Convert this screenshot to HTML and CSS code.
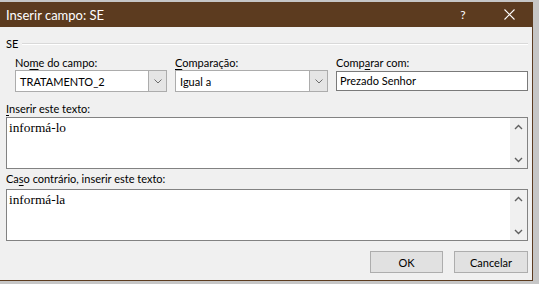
FILE: index.html
```html
<!DOCTYPE html>
<html lang="pt">
    <head>
        <meta charset="utf-8" />
        <title>Inserir campo: SE</title>
        <link rel="stylesheet" href="styles.css">
    </head>
    <body>
        <div class="window">
            <div class="titlebar">
                <span class="title">Inserir campo: SE</span>
                <span class="caption-btn help">?</span>
                <span class="caption-btn close">
                    <svg width="11" height="11" viewBox="0 0 11 11">
                        <path d="M0.5 0.5L10.5 10.5M10.5 0.5L0.5 10.5" stroke="#fff" stroke-width="1.1" fill="none" />
                    </svg>
                </span>
            </div>
            <div class="content">
                <div class="group-head">
                    <span>SE</span>
                    <span class="rule"></span>
                </div>
                <div class="fields">
                    <div class="field f1">
                        <label>No<u>m</u>e do campo:</label>
                        <div class="combo">
                            <span class="value">TRATAMENTO_2</span>
                            <span class="drop">
                                <svg width="8" height="5" viewBox="0 0 8 5"><path d="M0.5 0.5L4 4L7.5 0.5" stroke="#6d6d6d" fill="none" /></svg>
                            </span>
                        </div>
                    </div>
                    <div class="field f2">
                        <label><u>C</u>omparação:</label>
                        <div class="combo">
                            <span class="value">Igual a</span>
                            <span class="drop">
                                <svg width="8" height="5" viewBox="0 0 8 5"><path d="M0.5 0.5L4 4L7.5 0.5" stroke="#6d6d6d" fill="none" /></svg>
                            </span>
                        </div>
                    </div>
                    <div class="field f3">
                        <label>Comp<u>a</u>rar com:</label>
                        <div class="textbox">Prezado Senhor</div>
                    </div>
                </div>

                <label class="area-label"><u>I</u>nserir este texto:</label>
                <div class="area">
                    <div class="area-text">informá-lo</div>
                    <div class="vscroll">
                        <svg width="9" height="6" viewBox="0 0 9 6"><path d="M1 5L4.5 1.5L8 5" stroke="#606060" stroke-width="1.4" fill="none" /></svg>
                        <svg width="9" height="6" viewBox="0 0 9 6"><path d="M1 1L4.5 4.5L8 1" stroke="#606060" stroke-width="1.4" fill="none" /></svg>
                    </div>
                </div>

                <label class="area-label second">Ca<u>s</u>o contrário, inserir este texto:</label>
                <div class="area">
                    <div class="area-text">informá-la</div>
                    <div class="vscroll">
                        <svg width="9" height="6" viewBox="0 0 9 6"><path d="M1 5L4.5 1.5L8 5" stroke="#606060" stroke-width="1.4" fill="none" /></svg>
                        <svg width="9" height="6" viewBox="0 0 9 6"><path d="M1 1L4.5 4.5L8 1" stroke="#606060" stroke-width="1.4" fill="none" /></svg>
                    </div>
                </div>

                <div class="actions">
                    <button class="btn ok">OK</button>
                    <button class="btn cancel">Cancelar</button>
                </div>
            </div>
        </div>
    </body>
</html>
```

FILE: styles.css
```css
* {
    box-sizing: border-box;
}
body {
    margin: 0;
    background-color: #c6c6c6;
    font-family: Lato, "Noto Sans", sans-serif;
    font-size: 11px;
    color: #000;
}
u {
    text-decoration-thickness: 1px;
    text-underline-offset: 2px;
}

.window {
    margin-top: 2px;
    width: 533px;
    height: 279px;
    display: flex;
    flex-direction: column;
    background-color: #f0f0f0;
    border-right: 1px solid #5c3b1f;
    border-bottom: 1px solid #5c3b1f;
}

.titlebar {
    height: 25px;
    display: flex;
    align-items: center;
    background-color: #5c3b1f;
    color: #fff;
    font-size: 13px;
}
.titlebar .title {
    flex: 1;
    padding-left: 6px;
}
.caption-btn {
    width: 46px;
    height: 25px;
    display: flex;
    align-items: center;
    justify-content: center;
}
.caption-btn.help {
    font-size: 12px;
}

.content {
    padding: 0 4px 0 6px;
}

.group-head {
    margin-top: 9px;
    height: 15px;
    line-height: 15px;
    display: flex;
    align-items: center;
    gap: 4px;
}
.group-head .rule {
    flex: 1;
    border-top: 1px solid #d9d9d9;
    border-bottom: 1px solid #fff;
}

.fields {
    display: flex;
    gap: 8px;
    padding-left: 9px;
    margin-top: 5px;
}
.field {
    display: flex;
    flex-direction: column;
}
.field label {
    height: 14px;
    line-height: 14px;
}
.f1 {
    width: 152px;
}
.f2 {
    width: 153px;
}
.f3 {
    width: 192px;
}

.combo {
    height: 22px;
    display: flex;
    align-items: center;
    border: 1px solid #acacac;
    background-color: #fff;
}
.combo .value {
    flex: 1;
    padding-left: 4px;
}
.combo .drop {
    width: 18px;
    height: 20px;
    display: flex;
    align-items: center;
    justify-content: center;
    background-color: #e5e5e5;
    border-left: 1px solid #acacac;
}

.textbox {
    margin-top: 1px;
    height: 20px;
    line-height: 18px;
    padding-left: 3px;
    border: 1px solid #7a7a7a;
    background-color: #fff;
}

.area-label {
    display: block;
    margin-top: 10px;
    height: 14px;
    line-height: 14px;
    margin-bottom: 1px;
}
.area-label.second {
    margin-top: 3px;
    margin-bottom: 3px;
}

.area {
    height: 52px;
    display: flex;
    border: 1px solid #828282;
    background-color: #fff;
}
.area-text {
    flex: 1;
    padding: 2px 2px;
    font-family: "Liberation Serif", serif;
    font-size: 13.33px;
    line-height: 15px;
}
.vscroll {
    width: 17px;
    display: flex;
    flex-direction: column;
    justify-content: space-between;
    align-items: center;
    padding: 6px 0 5px;
    background-color: #f0f0f0;
}

.actions {
    display: flex;
    justify-content: flex-end;
    gap: 11px;
    margin-top: 10px;
}
.btn {
    height: 22px;
    padding: 0;
    font-family: inherit;
    font-size: 11px;
    color: #000;
    background-color: #e1e1e1;
    border: 1px solid #adadad;
}
.btn.ok {
    width: 73px;
}
.btn.cancel {
    width: 74px;
}
```
